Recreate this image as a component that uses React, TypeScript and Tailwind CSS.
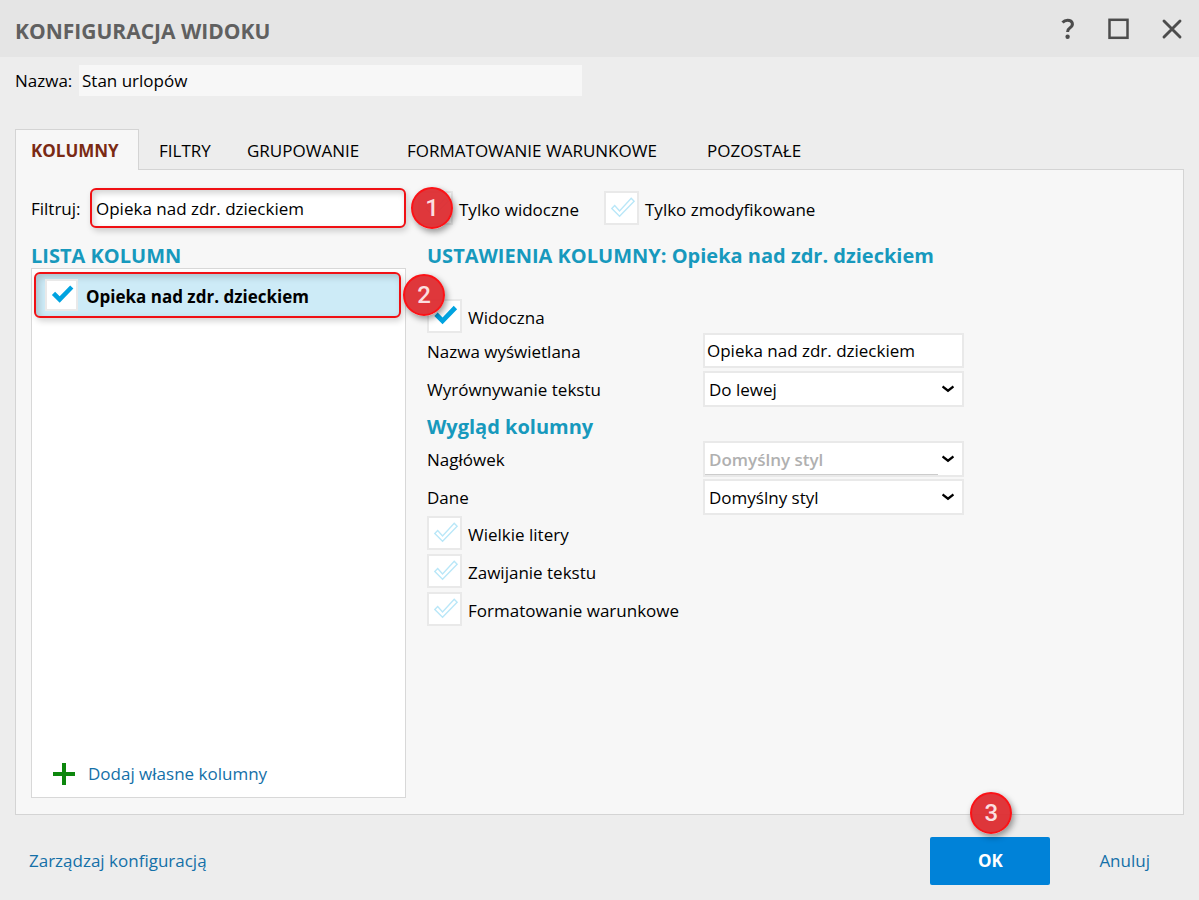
import React, { useState } from 'react';

interface TabItem {
  id: string;
  label: string;
  width: string;
}

const TABS: TabItem[] = [
  { id: 'columns', label: 'KOLUMNY', width: 'w-[124px]' },
  { id: 'filters', label: 'FILTRY', width: 'w-[88px]' },
  { id: 'grouping', label: 'GRUPOWANIE', width: 'w-[160px]' },
  { id: 'formatting', label: 'FORMATOWANIE WARUNKOWE', width: 'w-[300px]' },
  { id: 'other', label: 'POZOSTAŁE', width: 'w-[126px]' },
];

const COLUMN_NAME = 'Opieka nad zdr. dzieckiem';

interface CheckboxProps {
  id: string;
  label: string;
  defaultChecked?: boolean;
  bold?: boolean;
  small?: boolean;
}

const Checkbox: React.FC<CheckboxProps> = ({ id, label, defaultChecked = false, bold = false, small = false }) => {
  const [checked, setChecked] = useState(defaultChecked);

  return (
    <div className={`flex items-center ${small ? 'gap-2' : 'gap-1.5'}`}>
      <span className={`relative shrink-0 ${small ? 'h-8 w-[33px]' : 'h-[34px] w-[35px]'}`}>
        <input
          id={id}
          type="checkbox"
          checked={checked}
          onChange={(e) => setChecked(e.target.checked)}
          className="block size-full appearance-none border-2 border-[#e9e9e9] bg-white"
        />
        <svg viewBox="0 0 35 35" className="pointer-events-none absolute inset-0 size-full">
          {checked ? (
            <path d="M7 17.500l3.500-3.500 5 5L27 7l3.500 3.500L15.500 26z" fill="#00a3e0" />
          ) : (
            <path d="M7.500 18l3-3 5 5.500 12-13 3 3L15.500 26z" fill="none" stroke="#b9e7f8" strokeWidth="1.400" />
          )}
        </svg>
      </span>
      <label htmlFor={id} className={`whitespace-nowrap pt-[3px] ${bold ? 'font-bold' : ''}`}>{label}</label>
    </div>
  );
};

interface SelectFieldProps {
  id: string;
  label: string;
  value: string;
  muted?: boolean;
}

const SelectField: React.FC<SelectFieldProps> = ({ id, label, value, muted = false }) => (
  <div className="flex items-center">
    <label htmlFor={id} className="w-[276px] shrink-0 pt-0.5">{label}</label>
    <div className="relative h-9 w-[261px] border-2 border-[#e9e9e9] bg-white">
      <select
        id={id}
        defaultValue={value}
        className={`block size-full appearance-none px-1 pt-px outline-none ${muted ? 'font-semibold text-[#b0b0b0]' : ''}`}
      >
        <option>{value}</option>
      </select>
      {muted && <span className="absolute bottom-0 left-0 right-6 h-px bg-[#cccccc]" />}
      <svg viewBox="0 0 12 8" className="pointer-events-none absolute right-2 top-3 h-2 w-3">
        <path d="M0.500 1.500L6 5.700L11.500 1.500" fill="none" stroke="#000" strokeWidth="2.300" />
      </svg>
    </div>
  </div>
);

const StepBadge: React.FC<{ step: number; className: string }> = ({ step, className }) => (
  <span
    className={`pointer-events-none absolute z-10 flex size-[42px] items-center justify-center rounded-full border-2 border-[#fb1216] bg-[#dd2c30]/95 font-['Roboto',sans-serif] text-2xl font-medium text-[#fbdfe0] shadow-[2px_3px_6px_rgba(0,0,0,0.4)] ${className}`}
  >
    {step}
  </span>
);

const App: React.FC = () => {
  const [activeTab, setActiveTab] = useState('columns');

  return (
    <div className="flex min-h-screen flex-col bg-[#ededed] font-['Open_Sans','Noto_Sans',sans-serif] text-[17px] leading-6 text-black">
      <header className="flex h-[57px] items-center justify-between bg-[#e5e5e5] pl-[15px] pr-4">
        <h1 className="pt-1 text-[21px] font-bold text-[#606060]">KONFIGURACJA WIDOKU</h1>
        <div className="flex items-center gap-7 text-[#4c4c4c]">
          <button aria-label="Pomoc" className="size-6">
            <svg viewBox="0 0 24 24" className="size-6">
              <path d="M7.500 5.500Q9.500 3.300 12.600 3.300C18 3.300 19 8.500 14.800 11Q12.600 12.400 12.600 15" fill="none" stroke="currentColor" strokeWidth="3" />
              <circle cx="12.600" cy="19.700" r="2.200" fill="currentColor" />
            </svg>
          </button>
          <button aria-label="Maksymalizuj" className="size-6">
            <svg viewBox="0 0 24 24" className="size-6">
              <rect x="2.500" y="2.800" width="18" height="18" fill="none" stroke="currentColor" strokeWidth="2.500" />
            </svg>
          </button>
          <button aria-label="Zamknij" className="size-6">
            <svg viewBox="0 0 24 24" className="size-6">
              <path d="M5 4l16 16M21 4L5 20" fill="none" stroke="currentColor" strokeWidth="2.900" strokeLinecap="round" />
            </svg>
          </button>
        </div>
      </header>

      <div className="flex items-center px-[15px] pt-2">
        <label htmlFor="view-name" className="w-16 shrink-0">Nazwa:</label>
        <input
          id="view-name"
          type="text"
          defaultValue="Stan urlopów"
          className="h-[31px] w-[503px] bg-[#f7f7f7] px-[3px] outline-none"
        />
      </div>

      <main className="flex grow flex-col px-[15px] pt-[33px]">
        <nav className="z-10 flex">
          {TABS.map(tab => (
            <button
              key={tab.id}
              onClick={() => setActiveTab(tab.id)}
              className={`whitespace-nowrap text-left ${tab.width} ${
                tab.id === activeTab
                  ? 'mr-1 -mb-px h-[41px] border border-b-0 border-[#d4d4d4] bg-[#f7f7f7] pl-[15px] pt-0.5 font-bold text-[#7a2a14]'
                  : 'h-[39px] pl-4 pt-1'
              }`}
            >
              {tab.label}
            </button>
          ))}
        </nav>

        <section className="flex grow flex-col border border-[#d4d4d4] bg-[#f7f7f7] px-[15px] pb-4 pt-[18px]">
          <div className="relative flex items-center">
            <label htmlFor="filter" className="w-[59px] shrink-0 pt-0.5">Filtruj:</label>
            <input
              id="filter"
              type="text"
              defaultValue={COLUMN_NAME}
              className="h-10 w-[316px] rounded-md border-2 border-[#f01014] bg-white px-1 shadow-[2px_3px_6px_rgba(0,0,0,0.18),inset_2px_3px_6px_rgba(0,0,0,0.18)] outline-none"
            />
            <div className="ml-3 w-[186px]">
              <Checkbox id="only-visible" label="Tylko widoczne" />
            </div>
            <Checkbox id="only-modified" label="Tylko zmodyfikowane" />
            <StepBadge step={1} className="left-[380px] -top-px" />
          </div>

          <div className="mt-4 flex grow gap-[21px]">
            <div className="flex w-[375px] shrink-0 flex-col">
              <h2 className="text-xl leading-6 font-bold text-[#1799bd]">LISTA KOLUMN</h2>
              <div className="flex grow flex-col justify-between border border-[#d8d8d8] bg-white">
                <div className="relative my-[3px] ml-[2px] mr-1 flex h-[46px] items-center rounded-md border-2 border-[#f01014] bg-[#cdebf7] px-[9px] shadow-[2px_3px_6px_rgba(0,0,0,0.18),inset_3px_3px_7px_rgba(0,0,0,0.18)]">
                  <Checkbox id="column-care" label={COLUMN_NAME} defaultChecked bold small />
                  <StepBadge step={2} className="-right-[46px] top-0" />
                </div>
                <button className="flex items-center gap-3 pb-[11px] pl-5 text-[#1470a8]">
                  <svg viewBox="0 0 24 24" className="size-6">
                    <path d="M12 1v22M1 12h22" stroke="#0d870d" strokeWidth="4" />
                  </svg>
                  Dodaj własne kolumny
                </button>
              </div>
            </div>

            <div className="flex grow flex-col">
              <h2 className="text-xl leading-6 font-bold text-[#1799bd]">USTAWIENIA KOLUMNY: {COLUMN_NAME}</h2>
              <div className="mt-[31px]">
                <Checkbox id="visible" label="Widoczna" defaultChecked />
              </div>
              <div className="flex flex-col gap-[3px]">
                <div className="flex items-center">
                  <label htmlFor="display-name" className="w-[276px] shrink-0 pt-0.5">Nazwa wyświetlana</label>
                  <input
                    id="display-name"
                    type="text"
                    defaultValue={COLUMN_NAME}
                    className="h-[35px] w-[261px] border-2 border-[#e9e9e9] bg-white px-0.5 outline-none"
                  />
                </div>
                <SelectField id="align" label="Wyrównywanie tekstu" value="Do lewej" />
              </div>
              <h2 className="mb-0.5 mt-2 text-xl leading-6 font-bold text-[#1799bd]">Wygląd kolumny</h2>
              <div className="flex flex-col gap-0.5">
                <SelectField id="header-style" label="Nagłówek" value="Domyślny styl" muted />
                <SelectField id="data-style" label="Dane" value="Domyślny styl" />
              </div>
              <div className="mt-px flex flex-col gap-1">
                <Checkbox id="uppercase" label="Wielkie litery" />
                <Checkbox id="wrap" label="Zawijanie tekstu" />
                <Checkbox id="conditional" label="Formatowanie warunkowe" />
              </div>
            </div>
          </div>
        </section>
      </main>

      <footer className="flex items-center justify-between pb-[15px] pl-[29px] pr-[49px] pt-[22px]">
        <a href="#" className="text-[#1470a8]">Zarządzaj konfiguracją</a>
        <div className="relative flex items-center gap-[49px]">
          <button className="h-12 w-[120px] rounded-xs bg-[#0082d8] font-bold text-white">OK</button>
          <a href="#" className="text-[#1470a8]">Anuluj</a>
          <StepBadge step={3} className="-top-[45px] left-10" />
        </div>
      </footer>
    </div>
  );
};

export default App;
